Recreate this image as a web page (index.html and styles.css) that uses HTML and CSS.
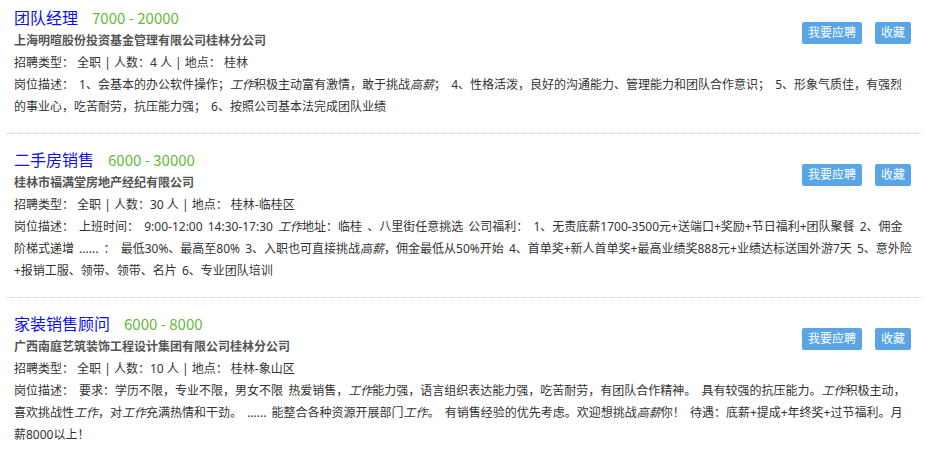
FILE: index.html
```html
<html>
<head>
<meta charset="utf-8">
<link rel="stylesheet" href="styles.css">
</head>
<body>
<div class="joblist">

  <div class="job">
    <div class="head">
      <div class="info">
        <div class="title"><a href="#">团队经理</a><span class="salary">7000 - 20000</span></div>
        <div class="company">上海明暄股份投资基金管理有限公司桂林分公司</div>
        <div class="meta">招聘类型： 全职 | 人数：4 人 | 地点： 桂林</div>
      </div>
      <div class="actions">
        <a class="btn" href="#">我要应聘</a>
        <a class="btn" href="#">收藏</a>
      </div>
    </div>
    <div class="desc">岗位描述： 1、会基本的办公软件操作；<em>工作</em>积极主动富有激情，敢于挑战<em>高薪</em>； 4、性格活泼，良好的沟通能力、管理能力和团队合作意识； 5、形象气质佳，有强烈的事业心，吃苦耐劳，抗压能力强； 6、按照公司基本法完成团队业绩</div>
  </div>

  <div class="job">
    <div class="head">
      <div class="info">
        <div class="title"><a href="#">二手房销售</a><span class="salary">6000 - 30000</span></div>
        <div class="company">桂林市福满堂房地产经纪有限公司</div>
        <div class="meta">招聘类型： 全职 | 人数：30 人 | 地点： 桂林-临桂区</div>
      </div>
      <div class="actions">
        <a class="btn" href="#">我要应聘</a>
        <a class="btn" href="#">收藏</a>
      </div>
    </div>
    <div class="desc">岗位描述： 上班时间： 9:00-12:00 14:30-17:30 <em>工作</em>地址：临桂 、八里街任意挑选 公司福利： 1、无责底薪1700-3500元+送端口+奖励+节日福利+团队聚餐 2、佣金阶梯式递增 ...... ： 最低30%、最高至80% 3、入职也可直接挑战<em>高薪</em>，佣金最低从50%开始 4、首单奖+新人首单奖+最高业绩奖888元+业绩达标送国外游7天 5、意外险+报销工服、领带、领带、名片 6、专业团队培训</div>
  </div>

  <div class="job">
    <div class="head">
      <div class="info">
        <div class="title"><a href="#">家装销售顾问</a><span class="salary">6000 - 8000</span></div>
        <div class="company">广西南庭艺筑装饰工程设计集团有限公司桂林分公司</div>
        <div class="meta">招聘类型： 全职 | 人数：10 人 | 地点： 桂林-象山区</div>
      </div>
      <div class="actions">
        <a class="btn" href="#">我要应聘</a>
        <a class="btn" href="#">收藏</a>
      </div>
    </div>
    <div class="desc">岗位描述： 要求：学历不限，专业不限，男女不限 热爱销售，<em>工作</em>能力强，语言组织表达能力强，吃苦耐劳，有团队合作精神。 具有较强的抗压能力。<em>工作</em>积极主动，喜欢挑战性<em>工作</em>，对<em>工作</em>充满热情和干劲。 ...... 能整合各种资源开展部门<em>工作</em>。 有销售经验的优先考虑。欢迎想挑战<em>高薪</em>你！ 待遇：底薪+提成+年终奖+过节福利。月薪8000以上！</div>
  </div>

</div>
</body>
</html>
```

FILE: styles.css
```css
body {
  margin: 0;
  font-family: "Noto Sans", "Noto Sans CJK SC", sans-serif;
  font-size: 12px;
  color: #333;
  background: #fff;
}

.joblist {
  padding: 0 12px 0 7px;
}

.job {
  padding: 13px 11px 15px 7px;
  border-bottom: 1px dotted #ccc;
}

.job:first-child {
  padding-top: 5px;
}

.head {
  display: flex;
}

.head .info {
  flex: 1;
}

.title {
  height: 25px;
  line-height: 25px;
  overflow: hidden;
}

.title a {
  font-size: 16px;
  color: #1010ee;
  text-decoration: none;
}

.title .salary {
  font-family: "Noto Sans CJK SC", sans-serif;
  font-size: 15px;
  color: #66b93c;
  margin-left: 14px;
}

.company {
  line-height: 22px;
  font-weight: bold;
  color: #555;
}

.meta {
  line-height: 22px;
}

.actions {
  display: flex;
  gap: 13px;
  padding-top: 17px;
}

.btn {
  display: block;
  height: 22px;
  line-height: 22px;
  padding: 0 6px;
  background: #5aa5e5;
  color: #fff;
  font-size: 12px;
  border-radius: 2px;
  text-decoration: none;
  align-self: flex-start;
}

.desc {
  line-height: 22px;
  word-spacing: 2px;
  margin-right: -2px;
}

.desc em {
  font-style: italic;
}
```
